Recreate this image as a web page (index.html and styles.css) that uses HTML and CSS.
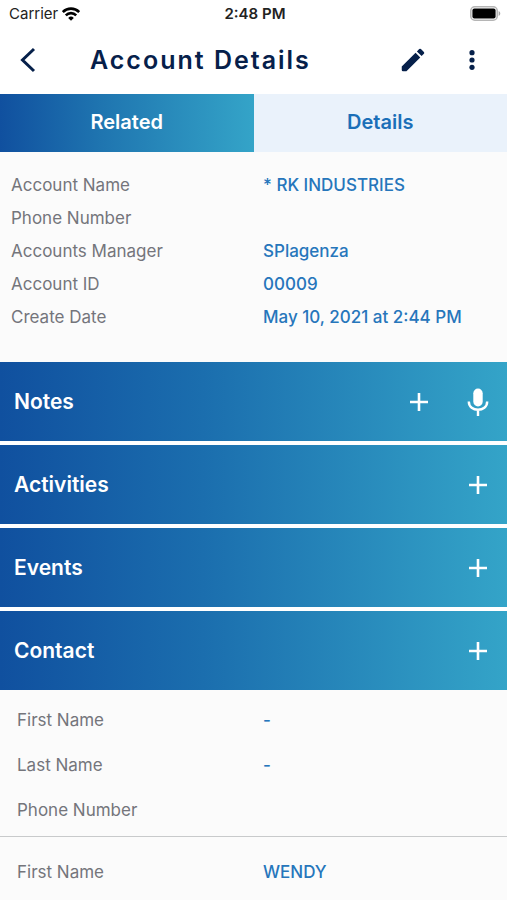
FILE: index.html
```html
<!DOCTYPE html>
<html lang="en">
<head>
    <meta charset="UTF-8">
    <meta name="viewport" content="width=device-width, initial-scale=1.0">
    <title>Account Details</title>
    <link rel="stylesheet" href="styles.css">
</head>
<body>

<div class="status-bar">
    <div class="carrier">
        <span>Carrier</span>
        <svg width="18" height="14" viewBox="0 0 18 14" fill="none" stroke="#000" stroke-width="2.6">
            <path d="M.8 5a11.6 11.6 0 0 1 16.4 0"/>
            <path d="M3.8 8.3a7.4 7.4 0 0 1 10.4 0"/>
            <path d="M9 13.8l-2.8-2.9a4 4 0 0 1 5.6 0z" fill="#000" stroke="none"/>
        </svg>
    </div>
    <div class="time">2:48 PM</div>
    <div class="battery">
        <svg width="31" height="15" viewBox="0 0 31 15">
            <rect x="0.8" y="0.8" width="26.4" height="13.4" rx="4" fill="#fff" stroke="#b5b5b5" stroke-width="1.6"/>
            <rect x="2.4" y="2.4" width="23.2" height="10.2" rx="2" fill="#000"/>
            <path d="M28.6 5c2.2.8 2.2 4.2 0 5z" fill="#a5a5a5"/>
        </svg>
    </div>
</div>

<header class="header">
    <button class="icon-btn" aria-label="Back">
        <svg width="28" height="28" viewBox="0 0 28 28" fill="none" stroke="#06204a" stroke-width="3">
            <path d="M20 3L8.5 14 20 25"/>
        </svg>
    </button>
    <h1 class="title">Account Details</h1>
    <button class="icon-btn" aria-label="Edit">
        <svg width="30" height="30" viewBox="0 0 24 24" fill="#06204a">
            <path d="M3 17.25V20a1 1 0 0 0 1 1h2.75L17.81 9.94l-3.75-3.75L3 17.25zM20.71 7.04a1 1 0 0 0 0-1.41l-2.34-2.34a1 1 0 0 0-1.41 0l-1.83 1.83 3.75 3.75 1.83-1.83z"/>
        </svg>
    </button>
    <button class="icon-btn" aria-label="More">
        <svg width="28" height="28" viewBox="0 0 28 28" fill="#06204a">
            <circle cx="14" cy="6.7" r="2.6"/>
            <circle cx="14" cy="14" r="2.6"/>
            <circle cx="14" cy="21.3" r="2.6"/>
        </svg>
    </button>
</header>

<nav class="tabs">
    <button class="tab active">Related</button>
    <button class="tab">Details</button>
</nav>

<dl class="info">
    <div class="row"><dt>Account Name</dt><dd>* RK INDUSTRIES</dd></div>
    <div class="row"><dt>Phone Number</dt><dd></dd></div>
    <div class="row"><dt>Accounts Manager</dt><dd>SPlagenza</dd></div>
    <div class="row"><dt>Account ID</dt><dd>00009</dd></div>
    <div class="row"><dt>Create Date</dt><dd>May 10, 2021 at 2:44 PM</dd></div>
</dl>

<div class="sections">
    <section class="section">
        <h2>Notes</h2>
        <button class="icon-btn" aria-label="Add note">
            <svg width="28" height="28" viewBox="0 0 28 28" stroke="#fff" stroke-width="2.6"><path d="M14 5v18M5 14h18"/></svg>
        </button>
        <button class="icon-btn" aria-label="Record note">
            <svg width="28" height="28" viewBox="0 0 28 28" fill="none" stroke="#fff" stroke-width="2.4">
                <rect x="9.3" y="0.5" width="9.4" height="18" rx="4.7" fill="#fff" stroke="none"/>
                <path d="M4.8 13.4c0 11.2 18.4 11.2 18.4 0M14 21.6V28"/>
            </svg>
        </button>
    </section>
    <section class="section">
        <h2>Activities</h2>
        <button class="icon-btn" aria-label="Add activity">
            <svg width="28" height="28" viewBox="0 0 28 28" stroke="#fff" stroke-width="2.6"><path d="M14 5v18M5 14h18"/></svg>
        </button>
    </section>
    <section class="section">
        <h2>Events</h2>
        <button class="icon-btn" aria-label="Add event">
            <svg width="28" height="28" viewBox="0 0 28 28" stroke="#fff" stroke-width="2.6"><path d="M14 5v18M5 14h18"/></svg>
        </button>
    </section>
    <section class="section">
        <h2>Contact</h2>
        <button class="icon-btn" aria-label="Add contact">
            <svg width="28" height="28" viewBox="0 0 28 28" stroke="#fff" stroke-width="2.6"><path d="M14 5v18M5 14h18"/></svg>
        </button>
    </section>
</div>

<dl class="contact">
    <div class="row"><dt>First Name</dt><dd>-</dd></div>
    <div class="row"><dt>Last Name</dt><dd>-</dd></div>
    <div class="row"><dt>Phone Number</dt><dd></dd></div>
</dl>
<dl class="contact next">
    <div class="row"><dt>First Name</dt><dd>WENDY</dd></div>
</dl>

</body>
</html>
```
FILE: styles.css
```css
* {
    box-sizing: border-box;
}

body {
    margin: 0;
    font-family: Inter, "Liberation Sans", sans-serif;
    background-color: #fbfbfb;
    color: #74757b;
}

button {
    border: none;
    background: none;
    padding: 0;
    font-family: inherit;
    cursor: pointer;
}

svg {
    display: block;
}

.status-bar {
    display: grid;
    grid-template-columns: 1fr auto 1fr;
    align-items: center;
    height: 27px;
    padding: 0 6px 0 9px;
    background-color: white;
    color: #222;
    font-size: 15px;
}

.carrier {
    display: flex;
    align-items: center;
    gap: 4px;
}

.time {
    font-weight: 600;
}

.battery {
    justify-self: end;
}

.header {
    display: flex;
    align-items: center;
    height: 67px;
    padding: 0 15px 2px 8px;
    background-color: white;
}

.icon-btn {
    display: flex;
    align-items: center;
    justify-content: center;
    width: 40px;
    height: 40px;
    flex-shrink: 0;
}

.header .icon-btn + .icon-btn {
    margin-left: 19px;
}

.title {
    flex: 1;
    margin: 0 0 0 42px;
    font-size: 25px;
    font-weight: 600;
    letter-spacing: 2px;
    color: #06204a;
}

.tabs {
    display: grid;
    grid-template-columns: 1fr 1fr;
    height: 58px;
}

.tab {
    padding-bottom: 2px;
    background-color: #eaf2fb;
    color: #1b6fb8;
    font-size: 20px;
    font-weight: 600;
}

.tab.active {
    background: linear-gradient(to right, #10509f, #1f75b0 40%, #34a4c8);
    color: white;
}

.info {
    margin: 0;
    padding: 17px 11px 28px;
}

.row {
    display: grid;
    grid-template-columns: 1fr 1fr;
    column-gap: 19px;
    font-size: 17px;
    line-height: 33px;
}

.row dd {
    margin: 0;
    color: #2676bb;
    font-weight: 500;
    white-space: nowrap;
}

.sections {
    display: grid;
    gap: 4px;
    background-color: white;
}

.section {
    display: flex;
    align-items: center;
    gap: 19px;
    height: 79px;
    padding: 0 9px 0 14px;
    background: linear-gradient(to right, #10509f, #1b6eae 40%, #34a4c8);
    color: white;
}

.section h2 {
    flex: 1;
    margin: 0;
    font-size: 21px;
    font-weight: 600;
}

.contact {
    margin: 0;
    padding: 8px 17px 3px;
}

.contact .row {
    line-height: 45px;
}

.contact.next {
    border-top: 1px solid #c8cacb;
    padding-top: 13px;
}
```
